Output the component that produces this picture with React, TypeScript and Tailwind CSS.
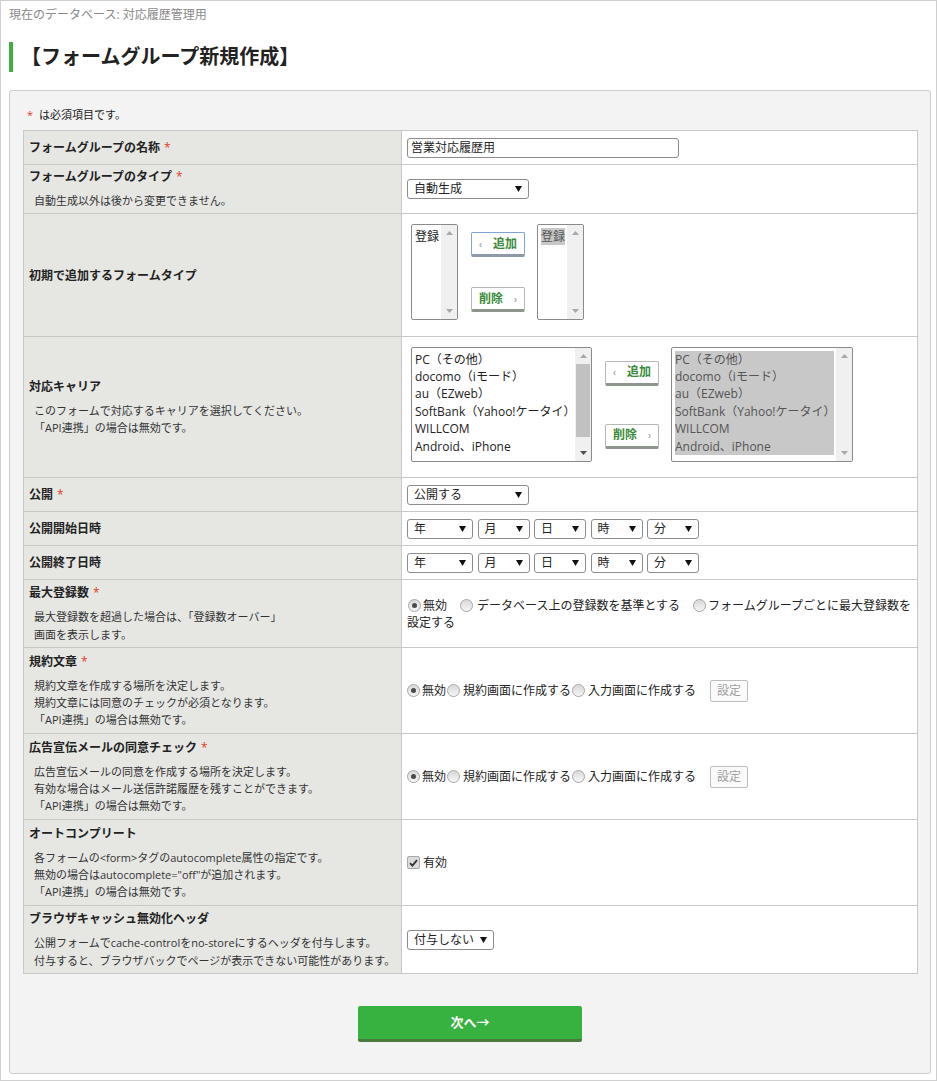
import React from 'react';

function Caret() {
  return (
    <svg width="7" height="6" viewBox="0 0 7 6" className="shrink-0">
      <polygon points="0,0 7,0 3.5,6" fill="#111" />
    </svg>
  );
}

function Select({ label, w }: { label: string; w: string }) {
  return (
    <div className={`${w} h-[20px] flex items-center justify-between border border-[#8c8c8c] rounded-[3px] bg-white pl-[6px] pr-[6px] text-[12px] leading-none`}>
      <span>{label}</span>
      <Caret />
    </div>
  );
}

function Arrow({ up, color }: { up?: boolean; color: string }) {
  return (
    <svg width="7" height="4" viewBox="0 0 7 4">
      <polygon points={up ? '0,4 7,4 3.5,0' : '0,0 7,0 3.5,4'} fill={color} />
    </svg>
  );
}

function ListBox({
  w,
  h,
  items,
  selected,
  thumb,
}: {
  w: string;
  h: string;
  items: string[];
  selected?: boolean;
  thumb?: boolean;
}) {
  return (
    <div className={`${w} ${h} flex border border-[#8a8a8a] rounded-[2px] bg-white overflow-hidden shrink-0`}>
      <div className="flex-1 pl-[3px] pr-[2px] pt-[3px] text-[12px] leading-[17.4px] whitespace-nowrap overflow-hidden">
        <div className={selected ? 'bg-[#c8c8c8] text-[#555]' : ''}>
          {items.map((it) => (
            <div key={it}>{it}</div>
          ))}
        </div>
      </div>
      <div className="w-[16px] bg-[#f0f0f0] flex flex-col">
        <div className="h-[16px] flex items-center justify-center">
          <Arrow up color="#a8a8a8" />
        </div>
        <div className="flex-1 px-[1px]">
          {thumb && <div className="h-[73px] bg-[#c1c1c1]" />}
        </div>
        <div className="h-[16px] flex items-center justify-center">
          <Arrow color={thumb ? '#505050' : '#a8a8a8'} />
        </div>
      </div>
    </div>
  );
}

function AddBtn({ focus }: { focus?: boolean }) {
  return (
    <div
      className={`w-[54px] h-[25px] flex items-center justify-between px-[7px] bg-white rounded-[2px] border border-b-[3px] text-[12px] font-bold text-[#3b8a3b] leading-none ${
        focus ? 'border-[#7ea4d8] border-b-[#8d98a8]' : 'border-[#b8b8b8] border-b-[#8e958d]'
      }`}
    >
      <span className="text-[#888] font-normal text-[10px]">‹</span>
      <span>追加</span>
    </div>
  );
}

function DelBtn() {
  return (
    <div className="w-[54px] h-[25px] flex items-center justify-between px-[7px] bg-white rounded-[2px] border border-[#b8b8b8] border-b-[3px] border-b-[#8e958d] text-[12px] font-bold text-[#3b8a3b] leading-none">
      <span>削除</span>
      <span className="text-[#888] font-normal text-[10px]">›</span>
    </div>
  );
}

function Radio({ on }: { on?: boolean }) {
  return (
    <span className="w-[13px] h-[13px] shrink-0 rounded-full border border-[#a8a8a8] bg-linear-to-b from-[#d8d8d8] to-[#f6f6f6] flex items-center justify-center">
      {on && <span className="w-[5px] h-[5px] rounded-full bg-[#4a4a4a]" />}
    </span>
  );
}

function Req() {
  return <span className="text-[#e2401c] font-normal ml-[4px]">*</span>;
}

function Label({ title, req, subs }: { title: string; req?: boolean; subs?: string[] }) {
  return (
    <td className="w-[378px] bg-[#e6e7e3] border border-[#c8c8c8] align-middle px-[5px]">
      <div className="text-[12px] font-bold leading-[17px]">
        {title}
        {req && <Req />}
      </div>
      {subs && (
        <div className="mt-[7px] pl-[5px] text-[11px] leading-[17.3px] text-[#333]">
          {subs.map((s) => (
            <div key={s}>{s}</div>
          ))}
        </div>
      )}
    </td>
  );
}

function Value({ children }: { children: React.ReactNode }) {
  return <td className="bg-white border border-[#c8c8c8] align-middle pl-[5px] pr-[4px] text-[12px]">{children}</td>;
}

function ConsentRadios() {
  return (
    <div className="flex items-center leading-[17px]">
      <Radio on />
      <span className="ml-[2px]">無効</span>
      <span className="ml-[1px]" />
      <Radio />
      <span className="ml-[3px]">規約画面に作成する</span>
      <span className="ml-[1px]" />
      <Radio />
      <span className="ml-[3px]">入力画面に作成する</span>
      <div className="ml-[14px] w-[38px] h-[22px] flex items-center justify-center border border-[#bdbdbd] rounded-[2px] bg-[#fafafa] text-[#a0a0a0] text-[12px] leading-none">
        設定
      </div>
    </div>
  );
}

const carriers = ['PC（その他）', 'docomo（iモード）', 'au（EZweb）', 'SoftBank（Yahoo!ケータイ）', 'WILLCOM', 'Android、iPhone'];
const api = '「API連携」の場合は無効です。';

export default function App() {
  return (
    <div className="w-[937px] h-[1081px] border border-[#d0d0d0] bg-white text-[#222] font-['Open_Sans','Noto_Sans_CJK_JP',sans-serif]">
      <div className="pt-[6px] pl-[8px] text-[12px] leading-[16px] text-[#888]">現在のデータベース: 対応履歴管理用</div>
      <div className="mt-[19px] ml-[8px] h-[30px] border-l-4 border-[#3cb043] pl-[8px] text-[20px] font-bold leading-[30px]">
        【フォームグループ新規作成】
      </div>

      <div className="ml-[8px] mt-[18px] w-[922px] bg-[#f3f3f3] border border-[#cdcdcd] rounded-[3px] px-[13px] pt-[16px] pb-[31px]">
        <div className="pl-[4px] text-[11px] leading-[16px] mb-[7px]">
          <span className="text-[#e2401c] mr-[6px]">*</span>は必須項目です。
        </div>

        <table className="w-[895px] border-collapse">
          <tbody>
            <tr className="h-[34px]">
              <Label title="フォームグループの名称" req />
              <Value>
                <div className="w-[272px] h-[20px] border border-[#8c8c8c] rounded-[3px] bg-white pl-[3px] leading-[18px]">営業対応履歴用</div>
              </Value>
            </tr>
            <tr className="h-[49px]">
              <Label title="フォームグループのタイプ" req subs={['自動生成以外は後から変更できません。']} />
              <Value>
                <Select label="自動生成" w="w-[122px]" />
              </Value>
            </tr>
            <tr className="h-[123px]">
              <Label title="初期で追加するフォームタイプ" />
              <Value>
                <div className="flex items-start ml-[4px] mb-[6px]">
                  <ListBox w="w-[47px]" h="h-[96px]" items={['登録']} />
                  <div className="ml-[13px] pt-[8px] flex flex-col gap-[30px]">
                    <AddBtn focus />
                    <DelBtn />
                  </div>
                  <div className="ml-[12px]">
                    <ListBox w="w-[47px]" h="h-[96px]" items={['登録']} selected />
                  </div>
                </div>
              </Value>
            </tr>
            <tr className="h-[141px]">
              <Label title="対応キャリア" subs={['このフォームで対応するキャリアを選択してください。', api]} />
              <Value>
                <div className="flex items-start ml-[4px] mb-[6px]">
                  <ListBox w="w-[181px]" h="h-[115px]" items={carriers} thumb />
                  <div className="ml-[13px] pt-[14px] flex flex-col gap-[38px]">
                    <AddBtn />
                    <DelBtn />
                  </div>
                  <div className="ml-[12px]">
                    <ListBox w="w-[182px]" h="h-[115px]" items={carriers} selected />
                  </div>
                </div>
              </Value>
            </tr>
            <tr className="h-[34px]">
              <Label title="公開" req />
              <Value>
                <Select label="公開する" w="w-[122px]" />
              </Value>
            </tr>
            {['公開開始日時', '公開終了日時'].map((t) => (
              <tr key={t} className="h-[34px]">
                <Label title={t} />
                <Value>
                  <div className="flex gap-[4.5px]">
                    <Select label="年" w="w-[66px]" />
                    <Select label="月" w="w-[52px]" />
                    <Select label="日" w="w-[52px]" />
                    <Select label="時" w="w-[52px]" />
                    <Select label="分" w="w-[52px]" />
                  </div>
                </Value>
              </tr>
            ))}
            <tr className="h-[68px]">
              <Label title="最大登録数" req subs={['最大登録数を超過した場合は、「登録数オーバー」', '画面を表示します。']} />
              <Value>
                <div className="leading-[17px]">
                  <div className="flex items-center whitespace-nowrap pl-[1px]">
                    <Radio on />
                    <span className="ml-[2px]">無効</span>
                    <span className="ml-[13px]" />
                    <Radio />
                    <span className="ml-[4px]">データベース上の登録数を基準とする</span>
                    <span className="ml-[13px]" />
                    <Radio />
                    <span className="ml-[2px]">フォームグループごとに最大登録数を</span>
                  </div>
                  <div>設定する</div>
                </div>
              </Value>
            </tr>
            <tr className="h-[86px]">
              <Label
                title="規約文章"
                req
                subs={['規約文章を作成する場所を決定します。', '規約文章には同意のチェックが必須となります。', api]}
              />
              <Value>
                <ConsentRadios />
              </Value>
            </tr>
            <tr className="h-[86px]">
              <Label
                title="広告宣伝メールの同意チェック"
                req
                subs={['広告宣伝メールの同意を作成する場所を決定します。', '有効な場合はメール送信許諾履歴を残すことができます。', api]}
              />
              <Value>
                <ConsentRadios />
              </Value>
            </tr>
            <tr className="h-[86px]">
              <Label
                title="オートコンプリート"
                subs={['各フォームの<form>タグのautocomplete属性の指定です。', '無効の場合はautocomplete="off"が追加されます。', api]}
              />
              <Value>
                <div className="flex items-center leading-[17px]">
                  <span className="w-[13px] h-[13px] rounded-[2px] border border-[#a8a8a8] bg-[#dcdcdc] flex items-center justify-center">
                    <svg width="9" height="8" viewBox="0 0 9 8">
                      <path d="M1 4.2 L3.4 6.6 L8 1.2" fill="none" stroke="#333" strokeWidth="1.8" />
                    </svg>
                  </span>
                  <span className="ml-[3px]">有効</span>
                </div>
              </Value>
            </tr>
            <tr className="h-[68px]">
              <Label
                title="ブラウザキャッシュ無効化ヘッダ"
                subs={['公開フォームでcache-controlをno-storeにするヘッダを付与します。', '付与すると、ブラウザバックでページが表示できない可能性があります。']}
              />
              <Value>
                <Select label="付与しない" w="w-[87px]" />
              </Value>
            </tr>
          </tbody>
        </table>

        <div className="mt-[32px] flex justify-center">
          <div className="w-[224px] h-[36px] flex items-center justify-center bg-[#37b13f] border-b-[3px] border-[#4a7b3a] rounded-[2px] text-white text-[13px] font-bold">
            次へ→
          </div>
        </div>
      </div>
    </div>
  );
}
